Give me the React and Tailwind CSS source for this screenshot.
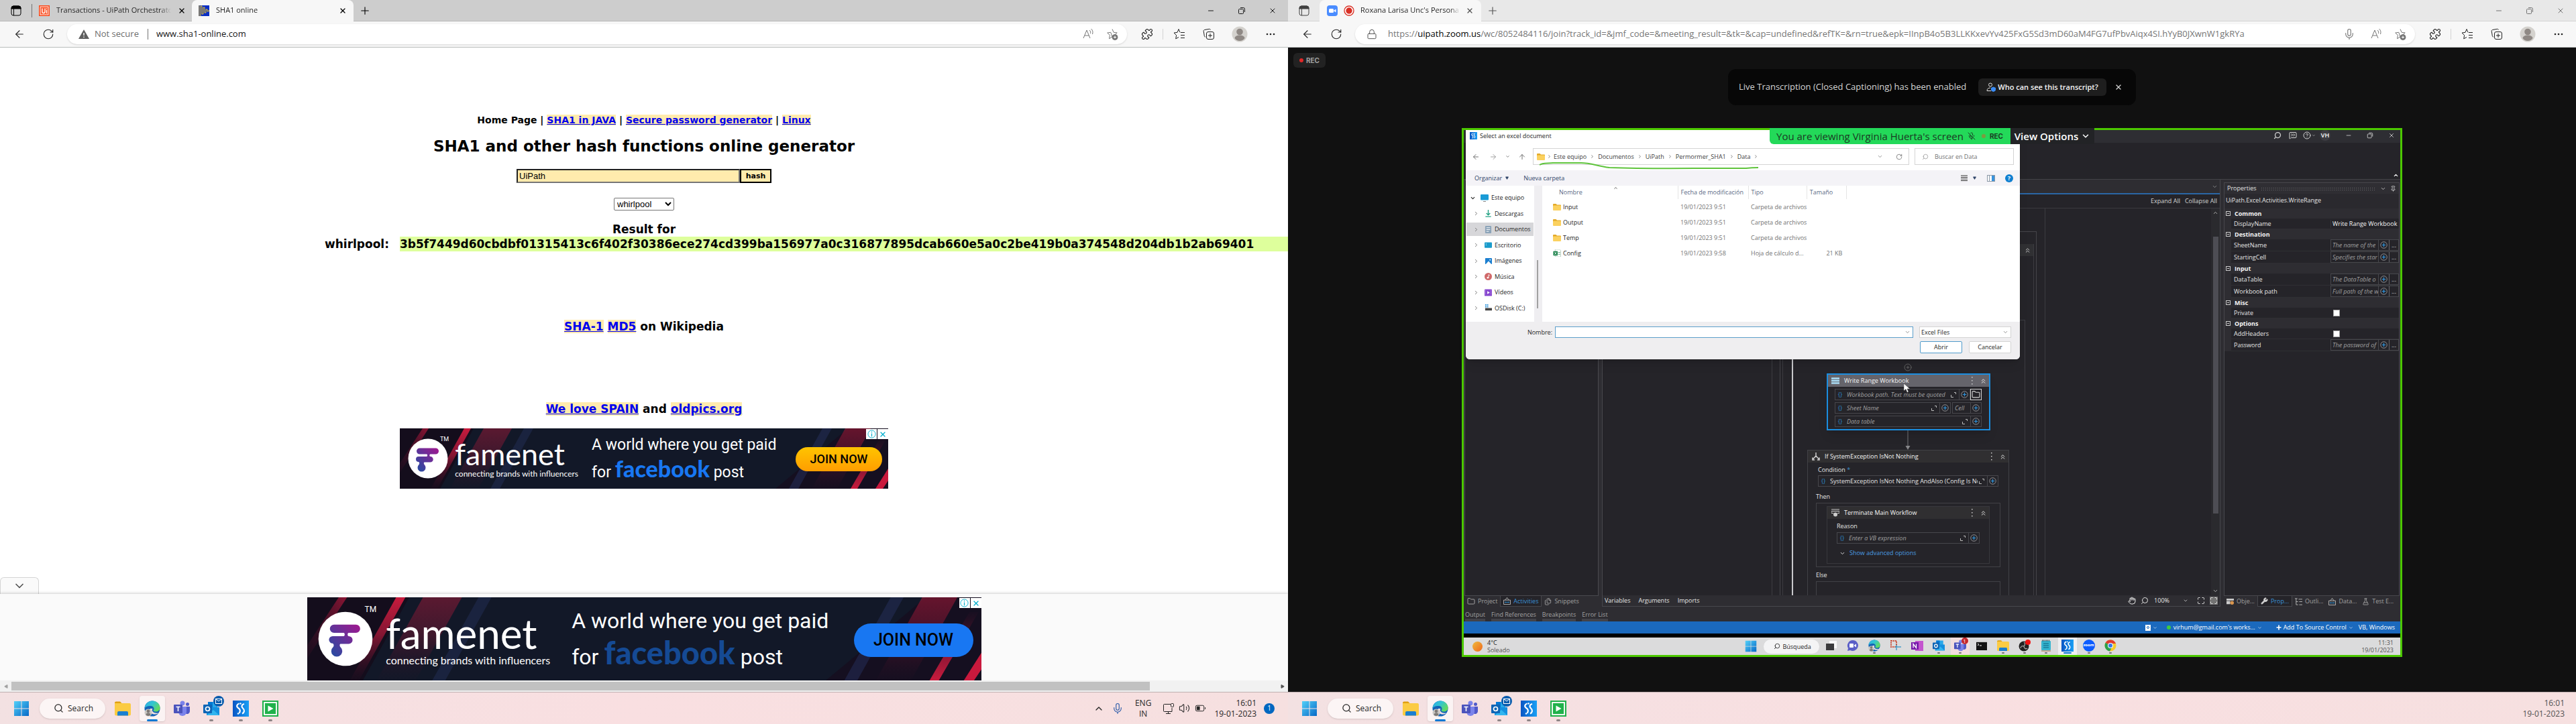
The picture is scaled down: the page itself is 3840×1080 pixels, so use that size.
import React from "react";
import {
  ArrowLeft, ArrowRight, ArrowUp, RotateCw, X, Minus, Plus, ChevronDown, ChevronUp, ChevronRight,
  ChevronsUp, Search, Puzzle, Lock, Mic, Folder, CirclePlus, CircleHelp, Hand, Wrench, Pin,
  Triangle, Volume2, Files, MicOff, Maximize, FlaskConical, MessageSquareQuote,
} from "lucide-react";

const UI = "font-['Open_Sans','Noto_Sans',sans-serif]";
const VERDANA = "font-['DejaVu_Sans',sans-serif]";

/* ---------- browser chrome icons ---------- */

function Workspaces({ className }) {
  return (
    <svg viewBox="0 0 16 16" className={className} fill="none" stroke="currentColor">
      <rect x="1" y="1" width="14" height="14" rx="3" />
      <path d="M1 4a3 3 0 0 1 3-3h8a3 3 0 0 1 3 3v1H1z" fill="currentColor" />
      <path d="M4.500 5v10" />
    </svg>
  );
}

function Restore({ className }) {
  return (
    <svg viewBox="0 0 12 12" className={className} fill="none" stroke="currentColor">
      <rect x="1.500" y="3.500" width="7" height="7" rx="1" />
      <path d="M4 1.500h4.500a2 2 0 0 1 2 2V8" />
    </svg>
  );
}

function ReadAloud() {
  return (
    <svg viewBox="0 0 18 18" className="size-[18px]" fill="none" stroke="#767676">
      <path d="M2 15 7 3l5 12M4 11h6" />
      <path d="M11 3c1.500 1 2 3 1.500 5M13.500 1c2.500 2 3 5 2 8" />
    </svg>
  );
}

function StarPlus() {
  return (
    <svg viewBox="0 0 18 18" className="size-[18px]" fill="none" stroke="#767676" strokeLinejoin="round">
      <path d="m9 1.500 2.200 4.800 5 .6-3.700 3.300M9 13l-4.500 2.700.9-5.300L1.700 7l5.100-.7z" />
      <circle cx="13" cy="13.500" r="4" fill="#767676" />
      <path d="M13 11.500v4M11 13.500h4" stroke="#fff" />
    </svg>
  );
}

function StarList() {
  return (
    <svg viewBox="0 0 18 18" className="size-[18px]" fill="none" stroke="#222" strokeLinejoin="round">
      <path d="M10 6.300 8 1.500 6 6.300 1 7l3.600 3.600-.9 5.200L8 13.500" />
      <path d="M11 6.500h6M11 10.500h6M11 14.500h6" />
    </svg>
  );
}

function Collections() {
  return (
    <svg viewBox="0 0 18 18" className="size-[18px]" fill="none" stroke="#222">
      <path d="M4 13c-1 0-1.500-.5-1.700-1.500L1.200 4.500C1 3.500 1.600 2.700 2.500 2.500l7-1.200c1-.2 1.700.4 1.900 1.300" />
      <rect x="5.500" y="5.500" width="11" height="11" rx="2.500" />
      <path d="M11 8v6M8 11h6" />
    </svg>
  );
}

function Avatar() {
  return (
    <svg viewBox="0 0 24 24" className="size-6">
      <circle cx="12" cy="12" r="11.500" fill="#d4d2ce" />
      <circle cx="12" cy="8.500" r="4.800" fill="#8f8985" />
      <path d="M4.500 18a7.500 4.500 0 0 1 15 0 9 9 0 0 1-15 0z" fill="#8f8985" />
    </svg>
  );
}

function Dots() {
  return (
    <svg viewBox="0 0 16 16" className="size-4" fill="#222">
      <circle cx="3" cy="8" r="1.300" /><circle cx="8" cy="8" r="1.300" /><circle cx="13" cy="8" r="1.300" />
    </svg>
  );
}

/* ---------- application icons ---------- */

function WindowsLogo({ className }) {
  return (
    <svg viewBox="0 0 24 24" className={className}>
      <defs>
        <linearGradient id="win" x1="0" y1="0" x2="1" y2="1">
          <stop offset="0" stopColor="#53d0f8" /><stop offset="1" stopColor="#0669c7" />
        </linearGradient>
      </defs>
      <path d="M1 1h10.500v10.500H1zM12.500 1H23v10.500H12.500zM1 12.500h10.500V23H1zM12.500 12.500H23V23H12.500z" fill="url(#win)" />
    </svg>
  );
}

function FolderIcon({ className }) {
  return (
    <svg viewBox="0 0 24 24" className={className}>
      <path d="M0 3.500a2 2 0 0 1 2-2h6l3 3H0z" fill="#e0a010" />
      <path d="M0 4h22a2 2 0 0 1 2 2v14.500a2 2 0 0 1-2 2H2a2 2 0 0 1-2-2z" fill="#fbcb43" />
      <path d="M4 22.500V18a2 2 0 0 1 2-2h12a2 2 0 0 1 2 2v4.500z" fill="#1a7fd0" />
    </svg>
  );
}

function SmallFolder({ className }) {
  return (
    <svg viewBox="0 0 12 10" className={className}>
      <path d="M0 1a1 1 0 0 1 1-1h3.500L6 1.500h5a1 1 0 0 1 1 1V5H0z" fill="#e3a927" />
      <rect y="2.500" width="12" height="7.500" rx="1" fill="#fbd15f" />
    </svg>
  );
}

function EdgeIcon({ className }) {
  return (
    <svg viewBox="0 0 24 24" className={className}>
      <defs>
        <linearGradient id="edgeA" x1="0" y1="0" x2="1" y2="0.600">
          <stop offset="0" stopColor="#2fa9e8" /><stop offset=".5" stopColor="#33c5d0" /><stop offset="1" stopColor="#66db5c" />
        </linearGradient>
      </defs>
      <circle cx="12" cy="12" r="11.500" fill="#1463b5" />
      <path d="M.5 11.500C1 5 6 .5 12 .5c6.500 0 11.500 4.800 11.500 10 0 4-3 6-6.500 6-3 0-4-1-3-2.500 1.500-2 0-5.500-4-6-4-.5-8 1-9.500 3.500z" fill="url(#edgeA)" />
      <path d="M8 14c0 4.500 4 7 9 6.500 2-.2 3.500-1 4.500-2-3 .5-8 .5-9.500-3-.5-1-.3-2 .5-3-2-.8-4.500-.5-4.500 1.500z" fill="#f3e0e2" />
      <circle cx="6" cy="18" r="5.500" fill="#c9c7c4" />
      <circle cx="6" cy="16" r="2.400" fill="#7d7875" />
      <path d="M2.500 21.500a3.500 3 0 0 1 7 0 5 5 0 0 1-7 0z" fill="#7d7875" />
    </svg>
  );
}

function TeamsIcon({ className }) {
  return (
    <svg viewBox="0 0 24 24" className={className}>
      <circle cx="13" cy="4" r="3.500" fill="#7b83eb" /><circle cx="20.500" cy="5.500" r="2.500" fill="#5059c9" />
      <path d="M16 9h8v7a4 4 0 0 1-6 3.500z" fill="#5059c9" />
      <path d="M7 9h12v8a6 6 0 0 1-12 0z" fill="#7b83eb" />
      <rect y="6" width="13" height="13" rx="1" fill="#4b53bc" />
      <path d="M3.500 9.500h6M6.500 9.500V16" stroke="#fff" strokeWidth="1.600" />
    </svg>
  );
}

function OutlookIcon({ className }) {
  return (
    <svg viewBox="0 0 24 24" className={className}>
      <path d="M7 2h14v9H7z" fill="#28a8ea" /><path d="M7 2h7v8H7z" fill="#0078d4" />
      <path d="M5 10h19v12H5z" fill="#1490df" /><path d="m5 22 10-8 9 8z" fill="#50d9ff" opacity=".5" />
      <rect y="6" width="13" height="13" rx="1" fill="#0f65b5" />
      <circle cx="6.500" cy="12.500" r="3" fill="none" stroke="#fff" strokeWidth="1.700" />
    </svg>
  );
}

function StudioIcon({ className }) {
  return (
    <svg viewBox="0 0 24 24" className={className}>
      <defs>
        <linearGradient id="studio" x1="0" y1="0" x2="1" y2="0"><stop offset="0" stopColor="#0a55c4" /><stop offset="1" stopColor="#1aa0f5" /></linearGradient>
      </defs>
      <rect width="24" height="24" fill="url(#studio)" />
      <g fill="none" stroke="#fff" strokeWidth="2.200">
        <path d="M9.500 4.500C6 5.500 5 9 8 11c3.500 2 3.500 5 1.500 8" />
        <path d="M17 5c-4 1-4.500 4-2 6.500 3 2.500 2.500 6.500-1 8" />
      </g>
      <circle cx="11.500" cy="4.500" r="1.200" fill="#fff" /><circle cx="8" cy="19.500" r="1.200" fill="#fff" />
    </svg>
  );
}

function AssistantIcon({ className }) {
  return (
    <svg viewBox="0 0 24 24" className={className}>
      <rect width="24" height="24" fill="#20b14b" />
      <rect x="3" y="3" width="18" height="18" fill="none" stroke="#fff" strokeWidth="1.800" />
      <path d="M8.500 7.500v9l8-4.500z" fill="#fff" />
    </svg>
  );
}

function UiFavicon() {
  return (
    <svg viewBox="0 0 16 16" className="size-4 shrink-0">
      <rect width="16" height="16" fill="#fa4616" />
      <rect x="1.500" y="1.500" width="13" height="13" fill="#fff" opacity=".9" />
      <rect x="2.500" y="2.500" width="11" height="11" fill="#fa5a30" />
      <path d="M5 4.500v5a2 2 0 0 0 4 0v-5M11.500 7v5M11.500 4.500v1" stroke="#fff" strokeWidth="1.300" fill="none" />
    </svg>
  );
}

function ShaFavicon() {
  return (
    <svg viewBox="0 0 16 16" className="size-4 shrink-0">
      <rect width="16" height="16" fill="#0b2fc4" />
      <path d="M1 0v16M3 16V1h2v12h2V3h2v8h2V6h2v3h2V7" stroke="#e8c229" fill="none" />
    </svg>
  );
}

function ZoomFavicon() {
  return (
    <svg viewBox="0 0 16 16" className="size-4 shrink-0">
      <rect width="16" height="16" rx="4" fill="#4a8cff" />
      <rect x="3" y="5" width="7" height="6" rx="1.500" fill="#fff" /><path d="m10.500 7.500 3-2v5l-3-2z" fill="#fff" />
    </svg>
  );
}

function RecFavicon() {
  return (
    <svg viewBox="0 0 16 16" className="size-4 shrink-0">
      <circle cx="8" cy="8" r="7" fill="#fff" stroke="#d93025" strokeWidth="1.300" /><circle cx="8" cy="8" r="4.700" fill="#d93025" />
    </svg>
  );
}

/* ---------- browser ---------- */

function WindowButtons({ muted }) {
  return (
    <div className={"ml-auto flex items-center gap-[34px] pr-[17px] " + (muted ? "text-neutral-500" : "text-neutral-900")}>
      <button aria-label="Minimize"><Minus className="size-3" strokeWidth={2} /></button>
      <button aria-label="Restore"><Restore className="size-3" /></button>
      <button aria-label="Close"><X className="size-3" strokeWidth={2} /></button>
    </div>
  );
}

function AddressBar({ children, mic }) {
  return (
    <div className="flex h-[39px] shrink-0 items-center border-b border-[#b9bdbb] bg-[#f7f7f7] pl-5 pr-[18px]">
      <button aria-label="Back"><ArrowLeft className="size-[18px] text-neutral-800" strokeWidth={1.500} /></button>
      <button aria-label="Refresh" className="ml-[25px]"><RotateCw className="size-[18px] text-neutral-800" strokeWidth={1.500} /></button>
      <div className="ml-[19px] flex h-[30px] min-w-0 flex-1 items-center rounded-[15px] bg-white pl-[17px] pr-[13px] shadow-sm">
        {children}
        <div className="ml-auto flex items-center gap-[18px]">
          {mic && <button aria-label="Microphone"><Mic className="mr-1 size-[18px] text-[#767676]" strokeWidth={1.500} /></button>}
          <button aria-label="Read aloud"><ReadAloud /></button>
          <button aria-label="Add to favorites"><StarPlus /></button>
        </div>
      </div>
      <button aria-label="Extensions" className="ml-[21px]"><Puzzle className="size-[18px] text-neutral-900" strokeWidth={1.500} /></button>
      <div className="ml-[14px] h-4 w-px bg-neutral-300" />
      <button aria-label="Favorites" className="ml-[15px]"><StarList /></button>
      <button aria-label="Collections" className="ml-[26px]"><Collections /></button>
      <button aria-label="Profile" className="ml-[25px]"><Avatar /></button>
      <button aria-label="Settings" className="ml-[26px]"><Dots /></button>
    </div>
  );
}

function TabTitle({ children }) {
  return (
    <span className="min-w-0 flex-1 overflow-hidden whitespace-nowrap text-left text-[11px] text-neutral-800 [mask-image:linear-gradient(to_right,black_90%,transparent)]">
      {children}
    </span>
  );
}

/* ---------- ad banner ---------- */

const AD = {
  small: {
    box: "w-[728px] h-[90px]", pad: "pl-3", logo: "size-[60px]", tm: "text-[9px]", brandGap: "ml-[9px]",
    brand: "text-[45px] leading-[46px]", tag: "text-xs leading-[14px]", copyGap: "ml-[20px]",
    copy: "text-[23px] leading-[35px]", fb: "text-[34px]",
    cta: "right-[9px] top-[28px] w-[129px] h-[36px] text-lg bg-linear-to-b from-[#ffc400] to-[#ff9d00]", fbColor: "text-[#1877f2]",
  },
  large: {
    box: "w-[1005px] h-[124px]", pad: "pl-4", logo: "size-[82px]", tm: "text-xs", brandGap: "ml-[14px]",
    brand: "text-[62px] leading-[64px]", tag: "text-base leading-[18px]", copyGap: "ml-[32px]",
    copy: "text-[32px] leading-[47px]", fb: "text-[47px]",
    cta: "right-[12px] top-[39px] w-[178px] h-[50px] text-[25px] bg-[#1877f2]", fbColor: "text-[#154a94]",
  },
};

function FamenetLogo({ className, id }) {
  return (
    <svg viewBox="0 0 60 60" className={className}>
      <defs>
        <linearGradient id={id} x1="0" y1="1" x2="1" y2="0"><stop offset="0" stopColor="#1f4fa3" /><stop offset="1" stopColor="#a3178f" /></linearGradient>
      </defs>
      <circle cx="30" cy="30" r="29.500" fill="#fff" />
      <path fill={"url(#" + id + ")"} d="M17.500 14.500h24a4.500 4.500 0 0 1 0 9h-8c-1.500 0-1.500 3.500 0 3.500a4 4 0 0 1 0 8.500h-9c-1 0-1 2.500 0 3.500a6 6 0 1 1-8 0c1-1 1-3.500-.5-4a4 4 0 0 1 0-8h12c1.500 0 1.500-3.500 0-3.500h-10.500a4.500 4.500 0 0 1 0-9z" />
    </svg>
  );
}

function AdBanner({ size }) {
  const s = AD[size];
  return (
    <section aria-label="Advertisement" className={"relative mx-auto flex shrink-0 items-center overflow-hidden bg-[#121828] text-white " + s.box + " " + s.pad}>
      <svg viewBox="0 0 728 90" preserveAspectRatio="none" className="absolute inset-0 size-full">
        <defs>
          <linearGradient id={"stripe" + size} x1="1" y1="0" x2="0" y2="1">
            <stop offset="0" stopColor="#b3173b" stopOpacity=".75" /><stop offset="1" stopColor="#3a1028" stopOpacity=".2" />
          </linearGradient>
          <linearGradient id={"red" + size} x1="0" y1="0" x2="0" y2="1">
            <stop offset="0" stopColor="#c81b3d" /><stop offset=".45" stopColor="#a01838" stopOpacity=".8" /><stop offset="1" stopColor="#3a1028" stopOpacity=".1" />
          </linearGradient>
          <linearGradient id={"up" + size} x1="0" y1="1" x2="0" y2="0">
            <stop offset="0" stopColor="#c81b3d" /><stop offset=".45" stopColor="#a01838" stopOpacity=".8" /><stop offset="1" stopColor="#3a1028" stopOpacity=".1" />
          </linearGradient>
        </defs>
        <path d="M0 0h110L60 90H0z" fill="#140d1c" />
        <path d="M34 0h9L0 66V52z" fill={"url(#stripe" + size + ")"} />
        <path d="M96 0h10L56 90H46z" fill={"url(#red" + size + ")"} />
        <path d="M125 0h42l-50 90H75z" fill={"url(#red" + size + ")"} opacity=".4" />
        <path d="M185 0h14l-50 90h-14z" fill="#25305c" opacity=".45" />
        <path d="M668 0h60v90H560z" fill="#160e1e" opacity=".8" />
        <path d="M630 0h14l-50 90h-14z" fill="#25305c" opacity=".5" />
        <path d="M664 0h38l-50 90h-38z" fill={"url(#red" + size + ")"} opacity=".45" />
        <path d="M715 16h10l-43 74h-10z" fill={"url(#up" + size + ")"} />
        <path d="M728 60v18l-8 12h-11z" fill="#c9193d" />
      </svg>
      <FamenetLogo className={"relative shrink-0 " + s.logo} id={"fame" + size} />
      <span className={"relative -ml-3 self-start pt-3 font-['Roboto',sans-serif] leading-none " + s.tm}>TM</span>
      <div className={"relative " + s.brandGap}>
        <div className={"font-['Lato',sans-serif] " + s.brand}>famenet</div>
        <div className={"font-['Lato',sans-serif] " + s.tag}>connecting brands with influencers</div>
      </div>
      <div className={"relative whitespace-nowrap font-['Roboto',sans-serif] " + s.copyGap + " " + s.copy}>
        <p>A world where you get paid</p>
        <p>for <b className={"font-['Lato',sans-serif] font-black " + s.fb + " " + s.fbColor}>facebook</b> post</p>
      </div>
      <a href="#join" className={"absolute flex items-center justify-center rounded-full font-['Roboto',sans-serif] font-medium text-black " + s.cta}>JOIN NOW</a>
      <div className="absolute right-0 top-px flex gap-px text-[#00aecd]">
        <button aria-label="About this ad" className="flex h-[15px] w-4 items-center justify-center bg-white">
          <svg viewBox="0 0 14 14" className="size-[13px]" fill="none" stroke="currentColor"><circle cx="7" cy="7" r="6" /><path d="M7 6v5M7 3v1.500" strokeWidth="1.300" /></svg>
        </button>
        <button aria-label="Close ad" className="flex h-[15px] w-4 items-center justify-center bg-white"><X className="size-3" strokeWidth={2.500} /></button>
      </div>
    </section>
  );
}

/* ---------- desktop taskbar ---------- */

function Task({ label, active, dot, children }) {
  return (
    <button aria-label={label} className={"relative flex h-[38px] w-[38px] items-center justify-center rounded " + (active ? "bg-white/60 shadow-sm" : "")}>
      {children}
      {active && <span className="absolute bottom-0 h-[3px] w-4 rounded-full bg-[#0a78d4]" />}
      {dot && <span className="absolute bottom-0 h-[3px] w-[6px] rounded-full bg-[#8d8586]" />}
    </button>
  );
}

function Taskbar({ children }) {
  return (
    <footer className="flex h-12 shrink-0 items-center border-t border-[#bfb0b1] bg-linear-to-r from-[#f3e1e2] via-[#f9dfe1] to-[#f6e0e0] pl-5 text-xs text-neutral-800">
      <button aria-label="Start"><WindowsLogo className="size-6" /></button>
      <button className="ml-[15px] flex h-[30px] w-[98px] items-center gap-[6px] rounded-full bg-[#fcf5f5] pl-[21px] shadow-sm">
        <Search className="size-[15px]" strokeWidth={2} />Search
      </button>
      <div className="ml-[7px] flex gap-[6px]">
        <Task label="File Explorer"><FolderIcon className="size-6" /></Task>
        <Task label="Microsoft Edge" active><EdgeIcon className="size-6" /></Task>
        <Task label="Teams"><TeamsIcon className="size-6" /></Task>
        <Task label="Outlook" dot>
          <OutlookIcon className="size-6" />
          <span className="absolute right-0 top-0 flex size-4 items-center justify-center rounded-full bg-[#0a5cad]">
            <svg viewBox="0 0 10 8" className="h-2 w-[10px]" fill="none" stroke="#fff"><rect x=".5" y=".5" width="9" height="7" /><path d="m1 1 4 3 4-3" /></svg>
          </span>
        </Task>
        <Task label="UiPath Studio" dot><StudioIcon className="size-6" /></Task>
        <Task label="UiPath Assistant" dot><AssistantIcon className="size-6" /></Task>
      </div>
      <div className="ml-auto flex items-center">{children}</div>
    </footer>
  );
}

function Clock({ className }) {
  return <div className={"text-right text-xs leading-4 " + className}><p>16:01</p><p>19-01-2023</p></div>;
}

/* ---------- left desktop ---------- */

function PageLink({ href, children }) {
  return <a href={href} className="bg-[#ffebad] text-[#0000ee] underline">{children}</a>;
}

function HashPage() {
  return (
    <main className={"flex min-h-0 flex-1 flex-col overflow-hidden bg-white pt-[100px] text-center font-bold text-black " + VERDANA}>
      <nav className="text-sm leading-[17px]">
        Home Page | <PageLink href="#java">SHA1 in JAVA</PageLink> | <PageLink href="#password">Secure password generator</PageLink> | <PageLink href="#linux">Linux</PageLink>
      </nav>
      <h1 className="mt-4 text-[23px] leading-[29px]">SHA1 and other hash functions online generator</h1>
      <form className="mt-[19px] flex flex-col items-center" onSubmit={(e) => e.preventDefault()}>
        <div className="flex h-[21px]">
          <input aria-label="Text to hash" defaultValue="UiPath" className="w-[333px] border-2 border-b-[#767676] border-l-[#222] border-r-[#767676] border-t-[#222] bg-[#ffebad] px-[2px] font-['Liberation_Sans',sans-serif] text-[13px] font-normal" />
          <button className="w-[47px] border-2 border-black bg-[#ffebad] text-[11px] leading-none">hash</button>
        </div>
        <select aria-label="Hash function" className="mt-[22px] h-[19px] w-[90px] rounded-xs border border-[#767676] bg-white font-['Liberation_Sans',sans-serif] text-[13px] leading-none font-normal">
          <option>whirlpool</option>
        </select>
      </form>
      <div className="mt-[17px] text-[17px] leading-[22px]">
        <p>Result for</p>
        <p className="flex whitespace-nowrap pl-[484px] text-left">
          <span className="w-[112px] shrink-0">whirlpool:</span>
          <span className="min-w-0 flex-1 overflow-hidden bg-[#deff9c]">3b5f7449d60cbdbf01315413c6f402f30386ece274cd399ba156977a0c316877895dcab660e5a0c2be419b0a374548d204db1b2ab69401</span>
        </p>
        <p className="mt-[101px]"><PageLink href="#sha1">SHA-1</PageLink> <PageLink href="#md5">MD5</PageLink> on Wikipedia</p>
        <p className="mt-[101px]"><PageLink href="#spain">We love SPAIN</PageLink> and <PageLink href="#oldpics">oldpics.org</PageLink></p>
      </div>
      <div className="mt-[18px] text-left font-normal"><AdBanner size="small" /></div>
      <div className="mt-auto text-left font-normal">
        <button aria-label="Hide ad" className="flex h-[25px] w-[58px] items-center justify-center rounded-t-md border border-b-0 border-neutral-300 bg-[#fafafa]">
          <ChevronDown className="size-5 text-neutral-600" strokeWidth={2} />
        </button>
        <div className="bg-[#fafafa] pt-[5px] shadow-[0_-1px_4px_rgba(0,0,0,0.2)]"><AdBanner size="large" /></div>
      </div>
    </main>
  );
}

function LeftDesktop() {
  return (
    <div className={"flex h-screen min-w-0 flex-1 flex-col overflow-hidden " + UI}>
      <header className="flex h-8 shrink-0 items-center border-b border-[#b9b9b9] bg-[#cdcdcd]">
        <button aria-label="Workspaces" className="ml-4"><Workspaces className="size-4" /></button>
        <div className="ml-[15px] h-5 w-px bg-neutral-500" />
        <div className="flex h-8 w-[238px] items-center gap-[10px] pl-[10px] pr-[9px]">
          <UiFavicon /><TabTitle>Transactions - UiPath Orchestrato</TabTitle>
          <button aria-label="Close tab"><X className="size-3" strokeWidth={2.500} /></button>
        </div>
        <div className="flex h-8 w-[241px] items-center gap-[10px] rounded-t-lg bg-[#f7f7f7] px-[10px]">
          <ShaFavicon /><TabTitle>SHA1 online</TabTitle>
          <button aria-label="Close tab"><X className="size-3" strokeWidth={2.500} /></button>
        </div>
        <button aria-label="New tab" className="ml-2"><Plus className="size-[18px]" strokeWidth={1.500} /></button>
        <WindowButtons />
      </header>
      <AddressBar>
        <svg viewBox="0 0 16 16" className="size-4"><path d="M8 1 16 15H0z" fill="#5e5e5e" /><path d="M8 6v4M8 11.500v1.500" stroke="#fff" strokeWidth="1.400" /></svg>
        <span className="ml-2 text-[13px] text-[#6e6e6e]">Not secure</span>
        <span className="ml-[13px] h-4 w-px bg-neutral-500" />
        <input aria-label="Address" defaultValue="www.sha1-online.com" className="ml-3 min-w-0 flex-1 text-[13px] text-neutral-900" />
      </AddressBar>
      <HashPage />
      <div className="flex h-[17px] shrink-0 items-center border-y-2 border-[#f1f1f1] bg-[#f1f1f1]">
        <button aria-label="Scroll left" className="flex w-[17px] justify-center"><Triangle className="size-[6px] -rotate-90 fill-neutral-400 text-neutral-400" /></button>
        <div className="flex h-full flex-1"><div className="h-full w-[90%] bg-[#c1c1c1]" /></div>
        <button aria-label="Scroll right" className="flex w-[17px] justify-center"><Triangle className="size-[6px] rotate-90 fill-neutral-600 text-neutral-600" /></button>
      </div>
      <Taskbar>
        <button aria-label="Hidden icons"><ChevronUp className="size-4" strokeWidth={2} /></button>
        <Mic className="ml-[11px] size-[18px] text-[#2a5aa8]" strokeWidth={1.500} />
        <div className="ml-[17px] text-center leading-4"><p>ENG</p><p>IN</p></div>
        <svg viewBox="0 0 18 18" className="ml-[17px] size-[18px]" fill="none" stroke="#222"><path d="M12 2.500H2.500a1 1 0 0 0-1 1v9a1 1 0 0 0 1 1H14V8M5 16.500h7M8.500 13.500v3" /><rect x="12.500" y="1.500" width="4" height="5" rx="1" /></svg>
        <Volume2 className="ml-[6px] size-[17px]" strokeWidth={1.500} />
        <svg viewBox="0 0 18 18" className="ml-[7px] size-[17px]" fill="none" stroke="#222"><rect x="1.500" y="4.500" width="13" height="9" rx="2" /><rect x="3.500" y="6.500" width="4" height="5" fill="#222" /><path d="M16.500 7.500v3" /></svg>
        <Clock className="ml-3" />
        <span className="ml-[11px] mr-5 flex size-4 items-center justify-center rounded-full bg-[#0067c0] text-[10px] text-white">1</span>
      </Taskbar>
    </div>
  );
}

/* ---------- file dialog ---------- */

const TREE = [
  ["Descargas", <svg viewBox="0 0 12 12" className="size-[11px]" fill="none" stroke="#22a183" strokeWidth="1.500"><path d="M6 0v8M3 5.500 6 8.500l3-3M1.500 11h9" /></svg>],
  ["Documentos", <svg viewBox="0 0 12 12" className="size-[11px]"><rect x="1" width="10" height="12" rx="1" fill="#8ba3b8" /><path d="M3 3h6M3 6h6M3 9h4" stroke="#fff" /></svg>],
  ["Escritorio", <svg viewBox="0 0 12 12" className="size-[11px]"><rect y="1.500" width="12" height="9" rx="1" fill="#1a9bcb" /><path d="M2 4h1M2 6h1" stroke="#fff" /></svg>],
  ["Imágenes", <svg viewBox="0 0 12 12" className="size-[11px]"><rect x="1" y="1" width="11" height="10" rx="1" fill="#1c7fd0" /><path d="m2 11 4.500-5 4.500 5z" fill="#fff" /><circle cx="9" cy="4" r="1" fill="#fff" /></svg>],
  ["Música", <svg viewBox="0 0 12 12" className="size-[11px]"><circle cx="6" cy="6" r="6" fill="#d0696a" /><path d="M6.500 8V3l2 1" stroke="#fff" fill="none" /><circle cx="5.300" cy="8" r="1.400" fill="#fff" /></svg>],
  ["Vídeos", <svg viewBox="0 0 12 12" className="size-[11px]"><rect y=".5" width="12" height="11" rx="1" fill="#8747cf" /><path d="m4.500 3.500 4 2.500-4 2.500z" fill="#fff" /><path d="M1.500 2v8M10.500 2v8" stroke="#c9a4f0" strokeDasharray="1 1" /></svg>],
  ["OSDisk (C:)", <svg viewBox="0 0 12 12" className="size-[11px]"><path d="M1 0h2v2H1zM4 0h2v2H4zM1 3h2v2H1zM4 3h2v2H4z" fill="#1c8ad6" /><rect x="1" y="6" width="11" height="4" fill="#444" /></svg>],
];

const FILES = [
  ["Input", "19/01/2023 9:51", "Carpeta de archivos", ""],
  ["Output", "19/01/2023 9:51", "Carpeta de archivos", ""],
  ["Temp", "19/01/2023 9:51", "Carpeta de archivos", ""],
  ["Config", "19/01/2023 9:58", "Hoja de cálculo d...", "21 KB"],
];

function ExcelIcon() {
  return (
    <svg viewBox="0 0 12 12" className="h-[11px] w-3"><path d="M3 0h7l2 2v10H3z" fill="#fff" stroke="#9bb5a5" strokeWidth=".7" /><rect y="3" width="7" height="7" fill="#127c43" /><path d="m2 4.500 3 4M5 4.500l-3 4" stroke="#fff" /><path d="M8 5h3M8 8h3" stroke="#3a9c68" /></svg>
  );
}

function FileDialog() {
  return (
    <section role="dialog" aria-label="Select an excel document" className="absolute left-[3px] top-0 flex h-[342px] w-[826px] flex-col overflow-hidden rounded-b-md bg-white text-[9px] text-neutral-800 shadow-lg">
      <div className="flex h-[17px] items-center gap-1 pl-[6px]"><StudioIcon className="size-[11px]" />Select an excel document</div>
      <div className="relative flex h-[43px] items-center pl-[9px] pr-[9px] pt-[2px] text-neutral-500">
        <button aria-label="Back"><ArrowLeft className="size-3" /></button>
        <button aria-label="Forward" className="ml-[14px]"><ArrowRight className="size-3 text-neutral-400" /></button>
        <button aria-label="Recent" className="ml-[12px]"><ChevronDown className="size-[7px]" strokeWidth={3} /></button>
        <button aria-label="Up" className="ml-[12px]"><ArrowUp className="size-3" /></button>
        <div className="ml-[10px] flex h-[25px] min-w-0 flex-1 items-center gap-[7px] border border-neutral-300 pl-[5px] pr-[9px]">
          <SmallFolder className="h-[10px] w-3" />
          <ChevronRight className="-mx-1 size-[7px]" strokeWidth={3} />
          {["Este equipo", "Documentos", "UiPath", "Permormer_SHA1", "Data"].map((c) => (
            <React.Fragment key={c}><button className="whitespace-nowrap text-neutral-700">{c}</button><ChevronRight className="-mx-[2px] size-[7px] shrink-0" strokeWidth={3} /></React.Fragment>
          ))}
          <button aria-label="Previous locations" className="ml-auto"><ChevronDown className="size-[9px]" /></button>
          <button aria-label="Refresh folder" className="ml-[12px]"><RotateCw className="size-[10px]" /></button>
        </div>
        <label className="ml-2 flex h-[25px] w-[148px] items-center gap-[9px] border border-neutral-300 pl-[10px]">
          <Search className="size-[10px] shrink-0 -scale-x-100 text-neutral-400" />
          <input aria-label="Buscar en Data" defaultValue="Buscar en Data" className="w-full text-neutral-500" />
        </label>
        <svg viewBox="0 0 330 12" className="absolute left-[108px] top-[30px] h-3 w-[330px]" fill="none" stroke="#5fc43c" strokeWidth="2"><path d="M2 5c4-3 10-2 20-3h42c14 0 22 4 42 7 60 2 120 1 150 1h54c8-1 9-1 18-1" /></svg>
      </div>
      <div className="flex h-[23px] items-center bg-[#f4f3f7] pl-[13px] pr-[10px] text-[#2f4468]">
        <button className="flex items-center gap-[5px]">Organizar<Triangle className="size-[5px] rotate-180 fill-current" /></button>
        <button className="ml-[22px]">Nueva carpeta</button>
        <button aria-label="Change view" className="ml-auto flex items-center gap-2">
          <svg viewBox="0 0 10 10" className="size-[10px]" stroke="#333"><path d="M0 1h10M0 3.500h10M0 6h10M0 8.500h10" /></svg>
          <Triangle className="size-[5px] rotate-180 fill-current" />
        </button>
        <button aria-label="Preview pane" className="ml-4"><svg viewBox="0 0 12 10" className="h-[10px] w-3"><rect x=".5" y=".5" width="11" height="9" fill="#fff" stroke="#8a97a5" /><path d="M7 1h4v8H7z" fill="#3993dc" /><path d="M3.500 1v8" stroke="#8a97a5" /></svg></button>
        <button aria-label="Help" className="ml-[15px] flex size-3 items-center justify-center rounded-full bg-[#0f7fd0] text-[9px] font-bold text-white">?</button>
      </div>
      <div className="flex h-[203px]">
        <ul className="flex h-[196px] w-[102px] flex-col pt-2">
          <li className="flex-1">
            <button className="flex h-5 w-full items-center pl-[6px]"><ChevronDown className="size-[9px]" strokeWidth={3} />
              <svg viewBox="0 0 12 11" className="ml-[7px] mr-1 h-[11px] w-3"><rect width="12" height="8.500" rx="1" fill="#1a9bd6" /><path d="M4 10.500h4" stroke="#888" /></svg>Este equipo
            </button>
          </li>
          {TREE.map(([name, icon]) => (
            <li key={name} className="flex-1">
              <button className={"ml-px flex h-5 w-[100px] items-center whitespace-nowrap pl-[10px] " + (name === "Documentos" ? "bg-[#d6d6d9]" : "")}>
                <ChevronRight className="mr-2 size-[9px] text-neutral-500" strokeWidth={2.500} /><span className="mr-1">{icon}</span>{name}
              </button>
            </li>
          ))}
        </ul>
        <div className="w-3 bg-[#efeef1] pt-[111px]"><div className="ml-1 h-[72px] w-[2px] bg-neutral-400" /></div>
        <div className="relative flex-1 pl-4">
          <ChevronUp className="absolute left-[106px] top-0 size-[7px]" strokeWidth={2.500} />
          <table className="table-fixed text-left">
            <colgroup><col className="w-[186px]" /><col className="w-[105px]" /><col className="w-[87px]" /><col className="w-[59px]" /></colgroup>
            <thead>
              <tr className="h-5 text-[#5b6a85]">
                <th className="border-r border-neutral-200 pl-[9px] font-normal">Nombre</th>
                <th className="border-r border-neutral-200 pl-1 font-normal">Fecha de modificación</th>
                <th className="border-r border-neutral-200 pl-1 font-normal">Tipo</th>
                <th className="border-r border-neutral-200 pl-1 font-normal">Tamaño</th>
              </tr>
            </thead>
            <tbody>
              {FILES.map(([n, d, t, s]) => (
                <tr key={n} className="h-[23px] whitespace-nowrap text-neutral-500">
                  <td className="text-neutral-800"><span className="flex items-center gap-[3px]">{n === "Config" ? <ExcelIcon /> : <SmallFolder className="h-[10px] w-3" />}{n}</span></td>
                  <td className="pl-1">{d}</td><td className="pl-1">{t}</td><td className="pr-[6px] text-right">{s}</td>
                </tr>
              ))}
            </tbody>
          </table>
        </div>
      </div>
      <div className="flex flex-1 flex-col bg-[#efeef0] pr-[13px] pt-[7px]">
        <div className="flex h-[17px]">
          <label htmlFor="fname" className="w-[133px] pr-1 text-right leading-[17px]">Nombre:</label>
          <div className="flex flex-1 items-center border border-[#5c9fcb] bg-white pr-[3px]"><input id="fname" className="min-w-0 flex-1 px-1" /><ChevronDown className="size-[9px] text-neutral-500" /></div>
          <div className="ml-[9px] flex w-[137px] items-center border border-neutral-300 bg-white pr-[3px]">
            <select aria-label="File type" className="flex-1 appearance-none bg-transparent pl-[2px]"><option>Excel Files</option></select><ChevronDown className="size-[9px] text-neutral-500" />
          </div>
        </div>
        <div className="mt-[5px] flex justify-end gap-[10px]">
          <button className="h-[18px] w-[63px] rounded-xs border border-[#4f9bcb] bg-white">Abrir</button>
          <button className="h-[18px] w-[63px] rounded-xs border border-neutral-300 bg-white">Cancelar</button>
        </div>
      </div>
    </section>
  );
}

/* ---------- shared studio window ---------- */

function Expand() {
  return <svg viewBox="0 0 8 8" className="size-2 shrink-0" fill="none" stroke="#bbb"><path d="M.5 4v3.500H4M5 .5h2.500V3" /></svg>;
}

function PlusBox() {
  return (
    <button aria-label="Add" className="flex h-full w-4 shrink-0 items-center justify-center border-l border-[#47474c]">
      <svg viewBox="0 0 12 12" className="size-[11px]" fill="none"><circle cx="6" cy="6" r="5.200" stroke="#9a9a9e" /><path d="M6 3v6M3 6h6" stroke="#2f96e0" strokeWidth="1.300" /></svg>
    </button>
  );
}

function Field({ value, plain, label, className, noIcon }) {
  return (
    <div className={"flex h-[17px] items-center border border-[#47474c] " + className}>
      {!noIcon && <span className="w-[14px] shrink-0 text-center text-[9px] text-[#2c84c4]">{"{}"}</span>}
      <input aria-label={label || value} defaultValue={value} className={"min-w-0 flex-1 pl-[3px] text-[9px] " + (plain ? "text-neutral-200" : "italic text-neutral-400")} />
      {!noIcon && <span className="ml-[2px] mr-1"><Expand /></span>}
      <PlusBox />
    </div>
  );
}

function NodeHeader({ icon, title, className }) {
  return (
    <div className={"flex h-[18px] items-center pr-[3px] text-neutral-100 " + className}>
      {icon}<span className="ml-[7px]">{title}</span>
      <svg viewBox="0 0 2 12" className="ml-auto mr-[10px] h-3 w-[2px]" fill="#ccc"><path d="M0 0h1.500v1.500H0zM0 5h1.500v1.500H0zM0 10h1.500v1.500H0z" /></svg>
      <button aria-label="Collapse"><ChevronsUp className="size-[11px]" strokeWidth={2} /></button>
    </div>
  );
}

function Canvas() {
  return (
    <div className="relative min-w-0 flex-1 overflow-hidden">
      <div className="absolute inset-y-0 left-[252px] w-[408px] border-x border-[#3c3c41]" />
      <div className="absolute bottom-0 left-[264px] top-[34px] w-[383px] border border-b-0 border-[#45454a]" />
      <div className="absolute bottom-0 left-[268px] top-[53px] w-[375px] border-x border-[#3c3c41]">
        <div className="flex h-[18px] items-center justify-end bg-[#303033] pr-[3px]"><ChevronsUp className="size-[11px] text-neutral-300" /></div>
      </div>
      <div className="absolute bottom-0 left-[282px] top-[166px] w-[348px] border border-b-0 border-l-2 border-[#3c3c41] border-l-[#c9c9cc]" />
      <CirclePlus className="absolute left-[449px] top-[231px] size-3 text-neutral-500" strokeWidth={1.500} />
      <svg viewBox="0 0 8 30" className="absolute left-[451px] top-[331px] h-[30px] w-2"><path d="M4 0v24" stroke="#77777a" /><path d="M.5 23h7L4 29z" fill="#88888b" /></svg>

      <section className="absolute left-[334px] top-[246px] w-[244px] border-2 border-[#1b8ee0] bg-[#252429] shadow-lg">
        <NodeHeader title="Write Range Workbook" className="bg-[#65646b] pl-[5px]" icon={<svg viewBox="0 0 12 10" className="h-[10px] w-3"><path d="M0 1.500h12M0 5h12M0 8.500h12" stroke="#a9dcf5" strokeWidth="2.500" /></svg>} />
        <div className="flex flex-col gap-[3px] py-[3px] pl-[10px] pr-[11px]">
          <div className="flex"><Field value="Workbook path. Text must be quoted" className="min-w-0 flex-1" /><button aria-label="Browse" className="flex h-[17px] w-[17px] items-center justify-center border border-neutral-300"><Folder className="size-[13px] text-neutral-300" /></button></div>
          <div className="flex gap-[2px]"><Field value="Sheet Name" className="min-w-0 flex-1" /><Field value="Cell" noIcon className="w-11" /></div>
          <Field value="Data table" className="" />
        </div>
      </section>

      <section className="absolute bottom-0 left-[305px] top-[360px] w-[301px] border border-b-0 border-[#414146] bg-[#252429] text-neutral-200">
        <NodeHeader title="If SystemException IsNot Nothing" className="bg-[#302f31] pl-[6px]" icon={<svg viewBox="0 0 12 12" className="size-3" fill="none" stroke="#ccc" strokeWidth="1.500"><path d="M6 0v5L1.500 10M6 5l4.500 5M1 7.500V11h3M11 7.500V11H8" /></svg>} />
        <div className="px-[12px] pt-1">
          <p className="pl-[3px] leading-[14px]">Condition <span className="text-[#3c8fc9]">*</span></p>
          <Field value="SystemException IsNot Nothing AndAlso (Config Is Not" plain label="Condition" className="ml-[3px] mr-[3px] mt-px" />
          <p className="mt-2 leading-[14px]">Then</p>
          <div className="mt-[2px] h-[96px] border border-[#414146] px-[15px] pt-1">
            <div className="h-[86px] border border-[#38383d]">
              <NodeHeader title="Terminate Main Workflow" className="bg-[#302f31] pl-[6px]" icon={<svg viewBox="0 0 12 12" className="size-3" fill="none" stroke="#ccc"><path d="M0 1h12M0 3.500h12v3H9M0 3.500v3h3" /><circle cx="6" cy="8.500" r="3" fill="#ccc" stroke="none" /></svg>} />
              <div className="px-[14px] pt-1">
                <p className="leading-[14px]">Reason</p>
                <Field value="Enter a VB expression" label="Reason" className="mt-[2px]" />
                <button className="mt-2 flex items-center gap-[6px] pl-1 text-[#4a9be0]"><ChevronDown className="size-[9px] text-neutral-200" strokeWidth={2.500} />Show advanced options</button>
              </div>
            </div>
          </div>
          <p className="mt-[5px] leading-[14px]">Else</p>
          <div className="mt-[2px] h-[30px] border border-[#414146]" />
        </div>
      </section>

      <svg viewBox="0 0 10 14" className="absolute left-[449px] top-[261px] h-[14px] w-[10px]"><path d="M0 0v11l3-2.500 2 5 2-1-2-4.500h4z" fill="#fff" stroke="#333" strokeWidth=".5" /></svg>
    </div>
  );
}

const PROPS = [
  ["Common", [["DisplayName", "text", "Write Range Workbook"]]],
  ["Destination", [["SheetName", "expr", "The name of the"], ["StartingCell", "expr", "Specifies the star"]]],
  ["Input", [["DataTable", "expr", "The DataTable o"], ["Workbook path", "expr", "Full path of the w"]]],
  ["Misc", [["Private", "check"]]],
  ["Options", [["AddHeaders", "check"], ["Password", "expr", "The password of"]]],
];

function PropRow({ name, kind, value }) {
  return (
    <div className={"ml-[10px] flex items-center border-b border-[#2f2f33] bg-[#252429] " + (kind === "expr" ? "h-[18px]" : "h-4")}>
      <label htmlFor={name} className="w-[148px] shrink-0 pl-1 text-neutral-200">{name}</label>
      {kind === "text" && <input id={name} defaultValue={value} className="min-w-0 flex-1 border-l border-[#35353a] pl-[2px] text-neutral-100" />}
      {kind === "check" && <input id={name} type="checkbox" className="ml-1 size-[10px] appearance-none border border-neutral-400 bg-white" />}
      {kind === "expr" && (
        <div className="flex h-[17px] min-w-0 flex-1 border border-[#47474c]">
          <input id={name} defaultValue={value} className="min-w-0 flex-1 pl-[2px] italic text-neutral-400" />
          <PlusBox />
          <button aria-label={"Edit " + name} className="w-[14px] shrink-0 border-l border-[#66666b] leading-none text-neutral-300">...</button>
        </div>
      )}
    </div>
  );
}

function PropertiesPanel() {
  return (
    <aside className="mr-px mt-1 flex w-[262px] shrink-0 flex-col">
      <div className="flex min-h-0 flex-1 flex-col border border-[#47474c] bg-[#252429] text-neutral-200">
        <div className="flex h-4 items-center gap-[6px] bg-[#2f2e33] px-1">
          <span>Properties</span>
          <span className="h-[5px] flex-1 bg-[radial-gradient(#6a6a6e_35%,transparent_40%)] bg-[length:3px_3px]" />
          <ChevronDown className="size-[9px]" /><Pin className="size-[9px]" />
        </div>
        <div className="h-[22px] bg-[#2a292e] pl-[2px] leading-[20px]">UiPath.Excel.Activities.WriteRange</div>
        <div className="bg-[#2e2d32]">
          {PROPS.map(([group, rows]) => (
            <div key={group}>
              <div className="flex h-[15px] items-center gap-[6px] pl-[2px] font-bold text-neutral-100">
                <svg viewBox="0 0 7 7" className="size-[7px]" fill="none" stroke="#ccc"><rect x=".5" y=".5" width="6" height="6" /><path d="M2 3.500h3" /></svg>{group}
              </div>
              {rows.map(([n, k, v]) => <PropRow key={n} name={n} kind={k} value={v} />)}
            </div>
          ))}
        </div>
      </div>
      <div className="flex h-4 items-center justify-between pr-[6px] text-neutral-400">
        <DockTab icon={<svg viewBox="0 0 12 12" className="size-[11px]"><path d="M0 1h12v3H0zM0 5h6v5H0z" fill="#ccc" /><circle cx="9" cy="8" r="3" fill="#d8954e" /></svg>}>Obje...</DockTab>
        <DockTab active icon={<Wrench className="size-[11px] fill-neutral-300 text-neutral-300" />}>Prop...</DockTab>
        <DockTab icon={<svg viewBox="0 0 12 12" className="size-[11px]" stroke="#bbb" fill="none"><path d="M0 1h4M2 1v10h3M2 6h3M6 2h6M7 6h5M7 11h5" /></svg>}>Outli...</DockTab>
        <DockTab icon={<BagIcon />}>Data...</DockTab>
        <DockTab icon={<FlaskConical className="size-[11px]" />}>Test E...</DockTab>
      </div>
    </aside>
  );
}

function BagIcon() {
  return <svg viewBox="0 0 12 12" className="size-[11px]" fill="none" stroke="#bbb"><path d="M.5 4.500h11v7H.5zM3 4.500 6 .5l3 4" /><path d="M3 7v2M9 7v2M3 8h6" stroke="#2c94dc" /></svg>;
}

function DockTab({ icon, active, children }) {
  return <button className={"flex h-4 items-center gap-1 whitespace-nowrap px-1 text-[9px] " + (active ? "border border-t-0 border-[#47474c] bg-[#252429] text-[#3a92d8]" : "text-neutral-400")}>{icon}{children}</button>;
}

function SharedTask({ label, dot, className, children }) {
  return (
    <button aria-label={label} className={"relative flex h-[26px] w-7 items-center justify-center pb-[3px] " + (className || "")}>
      {children}
      {dot && <span className={"absolute bottom-[2px] h-[2px] rounded-full " + (dot === "active" ? "w-3 bg-[#0a78d4]" : "w-1 bg-neutral-500")} />}
    </button>
  );
}

function SharedTaskbar() {
  const ic = "size-[18px]";
  return (
    <div className="relative flex h-[26px] items-center justify-between bg-[#dbdbdc] pl-[13px] pr-[10px] text-[9px] leading-[11px] text-neutral-600">
      <div className="flex items-center gap-[7px]">
        <svg viewBox="0 0 16 16" className="size-[15px]"><defs><linearGradient id="sun" x1="0" y1="0" x2="1" y2="1"><stop offset="0" stopColor="#eebb3c" /><stop offset="1" stopColor="#f0671c" /></linearGradient></defs><circle cx="8" cy="8" r="8" fill="url(#sun)" /></svg>
        <div><p className="text-neutral-900">4°C</p><p>Soleado</p></div>
      </div>
      <div className="absolute inset-x-0 flex items-center justify-center">
        <WindowsLogo className={ic} />
        <button className="ml-[10px] mr-1 flex h-[21px] w-[83px] items-center gap-1 rounded-full bg-[#f4f4f5] pl-[15px] text-neutral-800"><Search className="size-[10px] -scale-x-100" />Búsqueda</button>
        <div className="flex gap-1">
          <SharedTask label="Task view"><svg viewBox="0 0 18 18" className={ic}><rect x="6" y="2" width="11" height="11" fill="#f8f8f8" /><rect x="1" y="6" width="12" height="10" fill="#3a3a3c" /></svg></SharedTask>
          <SharedTask label="Chat"><svg viewBox="0 0 18 18" className={ic}><path d="M9 1a8 8 0 1 1-4 15l-4 1 1-4A8 8 0 0 1 9 1z" fill="#5b5fc7" /><rect x="4" y="6" width="6" height="6" rx="1" fill="#fff" /><path d="m11 8.500 3-2v5l-3-2z" fill="#fff" /></svg></SharedTask>
          <SharedTask label="Edge" dot><EdgeIcon className={ic} /></SharedTask>
          <SharedTask label="Snipping Tool"><svg viewBox="0 0 18 18" className={ic} fill="none"><rect x="2" y="2" width="8" height="9" stroke="#c94f3a" strokeWidth="2" strokeDasharray="2 1" /><path d="M10 8v8M8 11h9" stroke="#4aa0c9" strokeWidth="1.500" /></svg></SharedTask>
          <SharedTask label="OneNote"><svg viewBox="0 0 18 18" className={ic}><rect x="6" y="2" width="12" height="15" fill="#c455cf" /><rect y="4" width="11" height="11" fill="#7719aa" /><path d="M3 12.500V6.500l4.500 6V6.500" stroke="#fff" fill="none" strokeWidth="1.300" /></svg></SharedTask>
          <SharedTask label="Outlook" dot><OutlookIcon className={ic} /></SharedTask>
          <SharedTask label="Teams" dot className="bg-[#f3dede]"><TeamsIcon className={ic} /><span className="absolute right-[2px] top-0 flex size-[10px] items-center justify-center rounded-full bg-[#c4262e] text-[8px] leading-none text-white">1</span></SharedTask>
          <SharedTask label="Terminal"><svg viewBox="0 0 18 18" className={ic}><rect x="1" y="2" width="16" height="14" fill="#111" /><path d="M1 2h16v2H1z" fill="#ccc" /><path d="m3 6 2 1.500L3 9M6 9h3" stroke="#fff" fill="none" /></svg></SharedTask>
          <SharedTask label="Explorer" dot><FolderIcon className={ic} /></SharedTask>
          <SharedTask label="OBS" dot><svg viewBox="0 0 18 18" className={ic}><circle cx="8" cy="10" r="7.500" fill="#222" /><g fill="none" stroke="#aaa" strokeWidth="1.200"><path d="M8 4c2 1 2 4 0 6M3 13c0-3 3-4 5-3M13 13c-2 2-5 0-5-3" /></g><circle cx="14" cy="4" r="4" fill="#f01414" /></svg></SharedTask>
          <SharedTask label="Notepad" dot><svg viewBox="0 0 18 18" className={ic}><rect x="2" y="2" width="14" height="14" rx="1" fill="#35b4cf" /><path d="M3 1.500h12" stroke="#245" strokeDasharray="1 1" strokeWidth="2" /><path d="M5 6h8M5 9h8M5 12h8" stroke="#0b6080" /><path d="M2 17h14" stroke="#a86a3c" /></svg></SharedTask>
          <SharedTask label="Studio" dot="active" className="bg-[#efeff1]"><StudioIcon className={ic} /></SharedTask>
          <SharedTask label="Zoom" dot><span className="flex size-[18px] items-center justify-center rounded-full bg-[#0b5cff] text-[6px] font-bold text-white">zoom</span></SharedTask>
          <SharedTask label="Chrome" dot><svg viewBox="0 0 18 18" className={ic}><circle cx="9" cy="9" r="8.500" fill="#f7c92b" /><path d="M9 9 1.600 4.800A8.500 8.500 0 0 1 16.400 4.800L17 6H9z" fill="#e23b2e" /><path d="M1.600 4.800A8.500 8.500 0 0 0 8 17.400L11.500 11 9 9z" fill="#2ca24c" /><circle cx="9" cy="9" r="4" fill="#fff" /><circle cx="9" cy="9" r="3" fill="#3a78e8" /></svg></SharedTask>
        </div>
      </div>
      <div className="text-right"><p>11:31</p><p>19/01/2023</p></div>
    </div>
  );
}

function SharedScreen() {
  return (
    <div className="relative mx-[259px] mb-[52px] flex min-h-0 flex-1 flex-col border-[3px] border-[#4cc800] bg-[#2e2d32] text-[9px] leading-3">
      <div className="flex h-[19px] shrink-0 items-center justify-end bg-[#2e2e33] pb-[3px] pr-2 text-neutral-300">
        <Search className="size-3 -scale-x-100" strokeWidth={2.500} />
        <MessageSquareQuote className="ml-[11px] size-3" />
        <CircleHelp className="ml-[9px] size-3" /><ChevronDown className="ml-px size-[6px]" />
        <span className="ml-[6px] flex size-4 items-center justify-center rounded-full bg-[#3c3c42] font-semibold text-white">VH</span>
        <Minus className="ml-[22px] size-[10px]" /><Restore className="ml-[22px] size-[10px]" /><X className="ml-[22px] size-[10px]" />
      </div>
      <div className="flex h-[55px] shrink-0 items-end justify-end border-b border-[#434347] bg-[#252429] pr-[2px]"><ChevronUp className="mb-px size-[9px] text-white" strokeWidth={3} /></div>
      <div className="flex min-h-0 flex-1 gap-[5px]">
        <div className="ml-px flex w-[200px] shrink-0 flex-col">
          <div className="flex-1 border border-[#4a4a4f] bg-[#252429]" />
          <div className="flex h-4">
            <DockTab icon={<Folder className="size-3" />}>Project</DockTab>
            <DockTab active icon={<BagIcon />}>Activities</DockTab>
            <DockTab icon={<Files className="size-[11px]" />}>Snippets</DockTab>
          </div>
        </div>
        <div className="flex min-w-0 flex-1 flex-col border border-t-0 border-[#47474c]">
          <div className="flex h-[22px] shrink-0 items-center justify-end border-b-2 border-[#2a66a5] pr-[3px]"><ChevronDown className="size-[9px] text-neutral-400" /></div>
          <div className="flex h-[21px] shrink-0 items-center justify-end gap-[7px] border-b border-[#3a3a3f] bg-[#252429] pr-1 text-neutral-300"><button>Expand All</button><button>Collapse All</button></div>
          <div className="flex min-h-0 flex-1 bg-[#252429]">
            <Canvas />
            <div className="flex w-[13px] flex-col items-center justify-between bg-[#2a2a2e] py-[2px] text-neutral-300">
              <ChevronUp className="size-[9px]" />
              <div className="mb-auto mt-[31px] h-[72%] w-2 bg-[#4d4d54]" />
              <ChevronDown className="size-[9px]" />
            </div>
          </div>
          <div className="flex h-4 shrink-0 items-center gap-3 bg-[#2e2d32] pl-[3px] pr-[3px] text-neutral-200">
            <button>Variables</button><button>Arguments</button><button>Imports</button>
            <Hand className="ml-auto size-3" /><Search className="-ml-[5px] size-3 -scale-x-100" />
            <span className="-ml-1">100%</span><ChevronDown className="ml-2 size-2" /><Maximize className="ml-px size-3" /><Maximize className="-ml-[5px] size-3 bg-neutral-500" />
          </div>
        </div>
        <PropertiesPanel />
      </div>
      <div className="flex h-[22px] shrink-0 items-end gap-[9px] pl-[2px] text-neutral-400">
        {["Output", "Find References", "Breakpoints", "Error List"].map((t) => <button key={t} className="border-b-4 border-[#434349] leading-[13px]">{t}</button>)}
      </div>
      <div className="flex h-[18px] shrink-0 items-center justify-end bg-[#1b69bd] pr-2 text-white">
        <span className="flex h-[9px] w-2 items-center justify-center bg-white"><span className="size-1 rounded-full border border-[#1b69bd]" /></span><ChevronDown className="ml-[3px] size-[7px]" />
        <span className="ml-[14px] size-[6px] rounded-full bg-[#3ecb3e]" /><span className="ml-1">virhum@gmail.com's works...</span><ChevronDown className="ml-[3px] size-[7px]" />
        <Plus className="ml-[20px] size-[10px]" strokeWidth={4} /><span className="ml-[2px]">Add To Source Control</span><ChevronDown className="ml-[3px] size-[7px]" />
        <span className="ml-2">VB, Windows</span>
      </div>
      <div className="h-[6px] shrink-0 bg-black" />
      <SharedTaskbar />
      <FileDialog />
      <div className="absolute -top-[3px] left-1/2 flex h-6 w-[484px] -translate-x-1/2 text-[15px] leading-6">
        <div className="flex flex-1 items-center whitespace-nowrap rounded-bl-md bg-[#23d959] pl-[10px] pr-[11px] text-[#1b3a24]">
          You are viewing Virginia Huerta's screen<MicOff className="ml-[6px] size-3 shrink-0" />
          <span className="ml-auto size-[6px] rounded-full bg-[#7d9a3f]" /><span className="ml-[6px] font-['Inter',sans-serif] text-[10px] font-bold">REC</span>
        </div>
        <button className="flex w-[125px] items-center justify-center gap-1 bg-[#222326] font-semibold text-white">View Options<ChevronDown className="size-[14px]" strokeWidth={2.500} /></button>
      </div>
    </div>
  );
}

function RightDesktop() {
  return (
    <div className={"flex h-screen min-w-0 flex-1 flex-col overflow-hidden bg-[#111] " + UI}>
      <header className="flex h-8 shrink-0 items-center border-b border-[#d5d5d5] bg-[#e8e8e8]">
        <button aria-label="Workspaces" className="ml-4 text-neutral-700"><Workspaces className="size-4" /></button>
        <div className="ml-[15px] flex h-8 w-[241px] items-center gap-[9px] rounded-t-lg bg-[#f7f7f7] px-[11px]">
          <ZoomFavicon /><RecFavicon /><TabTitle>Roxana Larisa Unc's Persona</TabTitle>
          <button aria-label="Close tab"><X className="size-3 text-neutral-600" strokeWidth={2.500} /></button>
        </div>
        <button aria-label="New tab" className="ml-2 text-neutral-600"><Plus className="size-[18px]" strokeWidth={1.500} /></button>
        <WindowButtons muted />
      </header>
      <AddressBar mic>
        <Lock className="size-4 shrink-0 text-neutral-600" strokeWidth={1.500} />
        <div role="textbox" aria-label="Address" className="ml-4 min-w-0 flex-1 overflow-hidden whitespace-nowrap text-[13px] text-[#767676]">
          https://<span className="text-black">uipath.zoom.us</span>/wc/8052484116/join?track_id=&amp;jmf_code=&amp;meeting_result=&amp;tk=&amp;cap=undefined&amp;refTK=&amp;rn=true&amp;epk=IInpB4o5B3LLKKxevYv425FxG5Sd3mD60aM4FG7ufPbvAiqx4SI.hYyB0JXwnW1gkRYa
        </div>
      </AddressBar>
      <div className="flex h-[120px] shrink-0 items-start pl-2 pt-2">
        <span className="flex h-[22px] w-12 items-center justify-center gap-1 rounded-md bg-[#222] font-['Inter',sans-serif] text-[10px] font-bold text-neutral-400"><span className="size-[6px] rounded-full bg-[#e02828]" />REC</span>
        <div className="mr-14 mt-6 flex h-[54px] flex-1 justify-center">
          <div className="flex h-full w-[608px] items-center rounded-xl bg-[#070707] pl-4 text-[13px] text-neutral-300">
            <span>Live Transcription (Closed Captioning) has been enabled</span>
            <button className="ml-auto flex h-[26px] w-[191px] items-center justify-center gap-[3px] whitespace-nowrap rounded-md bg-[#1e1e1e] text-[11px] font-semibold text-neutral-100">
              <svg viewBox="0 0 14 14" className="size-[14px]" fill="none" stroke="#ddd"><circle cx="6" cy="3.500" r="2.500" /><path d="M7 12.500H1C1 9.500 3 8 6 8" /><path d="M10.500 6.500 14 8v3c0 1.500-2 2.500-3.500 3C9 13.500 7 12.500 7 11V8z" fill="#3a8cf5" stroke="none" /></svg>
              Who can see this transcript?
            </button>
            <button aria-label="Dismiss" className="ml-3 mr-5"><X className="size-3" strokeWidth={2.500} /></button>
          </div>
        </div>
      </div>
      <SharedScreen />
      <Taskbar><Clock className="mr-[17px] text-neutral-600" /></Taskbar>
    </div>
  );
}

export default function App() {
  return <div className="flex min-h-screen w-full bg-black"><LeftDesktop /><RightDesktop /></div>;
}
